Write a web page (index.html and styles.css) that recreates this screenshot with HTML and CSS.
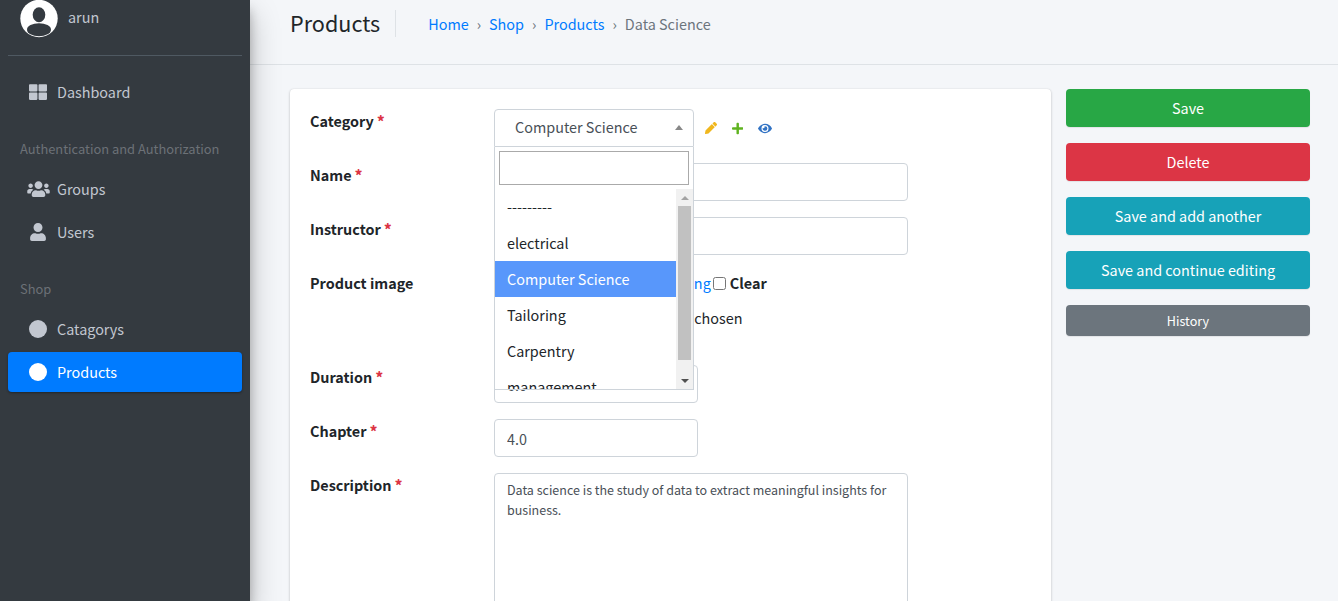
FILE: index.html
```html
<!DOCTYPE html>
<html lang="en">
<head>
<meta charset="utf-8">
<title>Products</title>
<link rel="stylesheet" href="styles.css">
</head>
<body>
<div class="app">
  <aside class="sidebar">
    <div class="user-panel">
      <svg class="avatar" viewBox="0 0 38 38"><circle cx="19" cy="18.5" r="18.7" fill="#fff"/><ellipse cx="19" cy="14.8" rx="6.3" ry="7.5" fill="#343a40"/><ellipse cx="19" cy="29.7" rx="12" ry="6.5" fill="#343a40"/></svg>
      <span class="user-name">arun</span>
    </div>
    <nav class="nav">
      <a class="nav-item"><span class="nav-icon"><svg class="i18" viewBox="0 0 512 512"><path d="M296 32h192c13.255 0 24 10.745 24 24v160c0 13.255-10.745 24-24 24H296c-13.255 0-24-10.745-24-24V56c0-13.255 10.745-24 24-24zm-80 0H24C10.745 32 0 42.745 0 56v160c0 13.255 10.745 24 24 24h192c13.255 0 24-10.745 24-24V56c0-13.255-10.745-24-24-24zM0 296v160c0 13.255 10.745 24 24 24h192c13.255 0 24-10.745 24-24V296c0-13.255-10.745-24-24-24H24c-13.255 0-24 10.745-24 24zm296 184h192c13.255 0 24-10.745 24-24V296c0-13.255-10.745-24-24-24H296c-13.255 0-24 10.745-24 24v160c0 13.255 10.745 24 24 24z"/></svg></span>Dashboard</a>
      <div class="nav-header">Authentication and Authorization</div>
      <a class="nav-item"><span class="nav-icon"><svg class="i-users" viewBox="0 0 640 512"><path d="M96 224c35.3 0 64-28.7 64-64s-28.7-64-64-64-64 28.7-64 64 28.7 64 64 64zm448 0c35.3 0 64-28.7 64-64s-28.7-64-64-64-64 28.7-64 64 28.7 64 64 64zm32 32h-64c-17.6 0-33.5 7.1-45.1 18.6 40.3 22.1 68.9 62 75.1 109.4h66c17.7 0 32-14.3 32-32v-32c0-35.3-28.7-64-64-64zm-256 0c61.9 0 112-50.1 112-112S381.9 32 320 32 208 82.1 208 144s50.1 112 112 112zm76.8 32h-8.3c-20.8 10-43.9 16-68.5 16s-47.6-6-68.5-16h-8.3C179.6 288 128 339.6 128 403.2V432c0 26.5 21.5 48 48 48h288c26.5 0 48-21.5 48-48v-28.8c0-63.6-51.6-115.2-115.2-115.2zm-223.7-13.4C161.5 263.1 145.6 256 128 256H64c-35.3 0-64 28.7-64 64v32c0 17.7 14.3 32 32 32h65.9c6.3-47.4 34.9-87.3 75.2-109.4z"/></svg></span>Groups</a>
      <a class="nav-item"><span class="nav-icon"><svg class="i-user" viewBox="0 0 448 512"><path d="M224 256c70.7 0 128-57.3 128-128S294.7 0 224 0 96 57.3 96 128s57.3 128 128 128zm89.6 32h-16.7c-22.2 10.2-46.9 16-72.9 16s-50.6-5.8-72.9-16h-16.7C60.2 288 0 348.2 0 422.4V464c0 26.5 21.5 48 48 48h352c26.5 0 48-21.5 48-48v-41.6c0-74.2-60.2-134.4-134.4-134.4z"/></svg></span>Users</a>
      <div class="nav-header">Shop</div>
      <a class="nav-item"><span class="nav-icon"><span class="dot"></span></span>Catagorys</a>
      <a class="nav-item active"><span class="nav-icon"><span class="dot"></span></span>Products</a>
    </nav>
  </aside>
  <main class="main">
    <header class="page-header">
      <h1 class="page-title">Products</h1>
      <ol class="crumbs">
        <li><a href="#">Home</a></li>
        <li class="sep">›</li>
        <li><a href="#">Shop</a></li>
        <li class="sep">›</li>
        <li><a href="#">Products</a></li>
        <li class="sep">›</li>
        <li class="crumb-current">Data Science</li>
      </ol>
    </header>
    <div class="content">
      <form class="card">
        <div class="row">
          <label class="label">Category <b class="req">*</b></label>
          <div class="field-inline">
            <div class="select-wrap">
              <div class="select"><span>Computer Science</span><i class="caret-up"></i></div>
              <div class="dropdown">
                <div class="search-box"><input class="search" type="text"></div>
                <div class="results">
                  <ul class="options">
                    <li>---------</li>
                    <li>electrical</li>
                    <li class="hl">Computer Science</li>
                    <li>Tailoring</li>
                    <li>Carpentry</li>
                    <li>management</li>
                  </ul>
                  <div class="scrollbar">
                    <div class="sb-btn"><i class="sb-up"></i></div>
                    <div class="sb-track"><div class="sb-thumb"></div></div>
                    <div class="sb-btn"><i class="sb-down"></i></div>
                  </div>
                </div>
              </div>
            </div>
            <div class="rel-icons">
              <svg class="rel rel-pencil" viewBox="0 0 512 512"><path d="M497.9 142.1l-46.1 46.1c-4.7 4.7-12.3 4.7-17 0l-111-111c-4.7-4.7-4.7-12.3 0-17l46.1-46.1c18.7-18.7 49.1-18.7 67.9 0l60.1 60.1c18.8 18.7 18.8 49.1 0 67.9zM284.2 99.8L21.6 362.4.4 483.9c-2.9 16.4 11.4 30.6 27.8 27.8l121.5-21.3 262.6-262.6c4.7-4.7 4.7-12.3 0-17l-111-111c-4.8-4.7-12.4-4.7-17.1 0z"/></svg>
              <svg class="rel rel-plus" viewBox="0 0 448 512"><path d="M416 208H272V64c0-17.67-14.33-32-32-32h-32c-17.67 0-32 14.33-32 32v144H32c-17.67 0-32 14.33-32 32v32c0 17.67 14.33 32 32 32h144v144c0 17.67 14.33 32 32 32h32c17.67 0 32-14.33 32-32V304h144c17.67 0 32-14.33 32-32v-32c0-17.67-14.33-32-32-32z"/></svg>
              <svg class="rel rel-eye" viewBox="0 0 576 512"><path d="M572.52 241.4C518.29 135.59 410.93 64 288 64S57.68 135.64 3.48 241.41a32.35 32.35 0 0 0 0 29.19C57.71 376.41 165.07 448 288 448s230.32-71.64 284.52-177.41a32.35 32.35 0 0 0 0-29.19zM288 400a144 144 0 1 1 144-144 143.93 143.93 0 0 1-144 144zm0-240a95.31 95.31 0 0 0-25.31 3.79 47.85 47.85 0 0 1-66.9 66.9A95.78 95.78 0 1 0 288 160z"/></svg>
            </div>
          </div>
        </div>
        <div class="row">
          <label class="label">Name <b class="req">*</b></label>
          <input class="input wide" type="text" value="Data Science">
        </div>
        <div class="row">
          <label class="label">Instructor <b class="req">*</b></label>
          <input class="input wide" type="text" value="Arun">
        </div>
        <div class="row row-image">
          <label class="label">Product image</label>
          <div class="image-field">
            <div class="image-line"><span>Currently: </span><a class="file-link" href="#">images/data_scie.png</a><input class="check" type="checkbox"><b class="clear">Clear</b></div>
            <div class="image-line image-line-2">Change: No file chosen</div>
          </div>
        </div>
        <div class="row">
          <label class="label">Duration <b class="req">*</b></label>
          <input class="input narrow" type="text" value="6.0">
        </div>
        <div class="row">
          <label class="label">Chapter <b class="req">*</b></label>
          <input class="input narrow" type="text" value="4.0">
        </div>
        <div class="row">
          <label class="label">Description <b class="req">*</b></label>
          <textarea class="textarea">Data science is the study of data to extract meaningful insights for business.</textarea>
        </div>
      </form>
      <div class="actions">
        <button class="btn btn-green" type="button">Save</button>
        <button class="btn btn-red" type="button">Delete</button>
        <button class="btn btn-teal" type="button">Save and add another</button>
        <button class="btn btn-teal" type="button">Save and continue editing</button>
        <button class="btn btn-gray" type="button">History</button>
      </div>
    </div>
  </main>
</div>
</body>
</html>
```
FILE: styles.css
```css
* { box-sizing: border-box; }
html, body { margin: 0; height: 100%; overflow: hidden; }
body {
  font-family: "Noto Sans CJK SC", "Noto Sans", sans-serif;
  font-size: 14.4px;
  line-height: 24px;
  color: #212529;
  background: #f4f6f9;
}
.app { display: flex; height: 601px; overflow: hidden; }

/* sidebar */
.sidebar {
  flex: 0 0 250px;
  background: #343a40;
  color: #c2c7d0;
  padding: 0 8px;
  position: relative;
  z-index: 2;
  box-shadow: 0 14px 28px rgba(0,0,0,.25), 0 10px 10px rgba(0,0,0,.22);
}
.user-panel {
  display: flex;
  align-items: flex-start;
  height: 56px;
  padding-left: 12px;
  border-bottom: 1px solid #4f5962;
}
.avatar { width: 38px; height: 38px; display: block; }
.user-name { margin-left: 10px; line-height: 34px; }
.nav { padding-top: 16px; }
.nav-item {
  display: flex;
  align-items: center;
  height: 40px;
  margin-bottom: 3px;
  border-radius: 4px;
  color: #c2c7d0;
}
.nav-item.active {
  background: #007bff;
  color: #fff;
  box-shadow: 0 1px 3px rgba(0,0,0,.12), 0 1px 2px rgba(0,0,0,.24);
}
.nav-icon {
  flex: 0 0 49px;
  display: flex;
  justify-content: center;
  padding-left: 11px;
  fill: #c2c7d0;
}
.i18 { width: 18px; height: 18px; display: block; }
.i-users { width: 23px; height: 18px; display: block; }
.i-user { width: 16px; height: 18px; display: block; }
.dot { display: block; width: 18px; height: 18px; border-radius: 50%; background: #c2c7d0; }
.active .dot { background: #fff; }
.nav-header {
  margin: 25px 0 8px;
  padding-left: 12px;
  font-size: 12.88px;
  line-height: 24px;
  white-space: nowrap;
  color: #6c7177;
}

/* main */
.main { flex: 1; min-width: 0; }
.page-header {
  display: flex;
  align-items: flex-start;
  height: 65px;
  padding: 10px 0 0 40px;
  border-bottom: 1px solid #dee2e6;
}
.page-title {
  margin: 0;
  padding-right: 15px;
  height: 27px;
  font-size: 21.6px;
  font-weight: 400;
  line-height: 26px;
  border-right: 1px solid #dee2e6;
}
.crumbs {
  display: flex;
  margin: 0;
  padding: 2px 0 0 32px;
  list-style: none;
  color: #6c757d;
}
.crumbs a { color: #007bff; text-decoration: none; }
.sep { padding: 0 8px; }
.content {
  display: flex;
  align-items: flex-start;
  gap: 15px;
  padding: 24px 28px 0 40px;
}

/* form */
.card {
  flex: 0 0 761px;
  height: 560px;
  padding: 20px;
  background: #fff;
  border-radius: 4px;
  box-shadow: 0 0 1px rgba(0,0,0,.125), 0 1px 3px rgba(0,0,0,.2);
}
.row { display: flex; align-items: flex-start; margin-bottom: 16px; }
.label { flex: 0 0 184px; font-weight: 700; }
.req { color: #dc3545; }
.input {
  height: 38px;
  padding: 6px 12px;
  font: inherit;
  color: #495057;
  background: #fff;
  border: 1px solid #ced4da;
  border-radius: 4px;
}
.wide { width: 414px; }
.narrow { width: 204px; }
.textarea {
  display: block;
  width: 414px;
  height: 200px;
  padding: 6px 12px;
  font: inherit;
  font-size: 12.5px;
  line-height: 20px;
  color: #495057;
  border: 1px solid #ced4da;
  border-radius: 4px;
  resize: none;
}
.field-inline { display: flex; align-items: flex-start; }
.select-wrap { position: relative; width: 200px; }
.select {
  display: flex;
  align-items: center;
  height: 38px;
  padding: 0 10px 2px 20px;
  justify-content: space-between;
  color: #495057;
  border: 1px solid #ced4da;
  border-radius: 4px 4px 0 0;
  background: #fff;
}
.caret-up {
  width: 0; height: 0;
  border-left: 4px solid transparent;
  border-right: 4px solid transparent;
  border-bottom: 5px solid #888;
}
.dropdown {
  position: absolute;
  top: 38px;
  left: 0;
  width: 200px;
  background: #fff;
  border: 1px solid #ced4da;
  border-top: 0;
  z-index: 5;
}
.search-box { padding: 4px; }
.search {
  display: block;
  width: 100%;
  height: 34px;
  border: 1px solid #aaa;
  background: #fff;
  outline: 0;
}
.results { display: flex; height: 200px; overflow: hidden; }
.options { flex: 1; margin: 0; padding: 0; list-style: none; overflow: hidden; }
.options li { height: 36px; padding: 6px 12px; color: #212529; }
.options li.hl { background: #5897fb; color: #fff; }
.scrollbar { flex: 0 0 17px; display: flex; flex-direction: column; background: #f1f1f1; }
.sb-btn { flex: 0 0 17px; display: flex; align-items: center; justify-content: center; }
.sb-track { flex: 1; padding: 0 2px; }
.sb-thumb { height: 154px; background: #c1c1c1; }
.sb-up, .sb-down { width: 0; height: 0; border-left: 4px solid transparent; border-right: 4px solid transparent; }
.sb-up { border-bottom: 4px solid #a3a3a3; }
.sb-down { border-top: 4px solid #505050; }
.rel-icons { display: flex; align-items: center; height: 38px; padding-left: 11px; }
.rel { display: block; height: 13px; }
.rel-pencil { width: 12px; height: 12px; fill: #f0b71d; }
.rel-plus { width: 11.4px; margin-left: 15px; fill: #5fb31f; }
.rel-eye { width: 14px; margin-left: 15px; fill: #3273c4; }
.row-image { height: 78px; }
.image-field { flex: 1; }
.image-line { display: flex; align-items: center; white-space: pre; height: 24px; }
.image-line-2 { margin-top: 11px; padding-left: 96px; }
.file-link { color: #007bff; text-decoration: none; }
.check { width: 13px; height: 13px; margin: 0 4px 0 2px; }
.clear { font-weight: 700; }

/* actions */
.actions { flex: 0 0 244px; display: flex; flex-direction: column; gap: 16px; }
.btn {
  height: 38px;
  font: inherit;
  color: #fff;
  border: 0;
  border-radius: 4px;
  box-shadow: 0 1px 1px rgba(0,0,0,.075);
}
.btn-green { background: #28a745; }
.btn-red { background: #dc3545; }
.btn-teal { background: #17a2b8; }
.btn-gray { height: 31px; padding-bottom: 2px; font-size: 12.6px; line-height: 21px; background: #6c757d; }
```
